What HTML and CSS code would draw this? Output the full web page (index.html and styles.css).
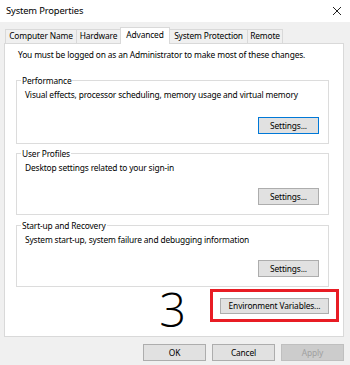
FILE: index.html
```html
<!DOCTYPE html>
<html lang="en">
<head>
<meta charset="utf-8">
<title>System Properties</title>
<link rel="stylesheet" href="styles.css">
</head>
<body>
<div class="window">
  <div class="titlebar">
    <span class="title">System Properties</span>
    <svg class="close" width="10" height="10" viewBox="0 0 10 10" aria-label="Close"><path d="M1 1 L9 9 M9 1 L1 9" stroke="#222" stroke-width="1" fill="none"/></svg>
  </div>
  <div class="content">
    <div class="tabs">
      <div class="tab t-name">Computer Name</div>
      <div class="tab t-hw">Hardware</div>
      <div class="tab t-adv active">Advanced</div>
      <div class="tab t-sp">System Protection</div>
      <div class="tab t-rem">Remote</div>
    </div>
    <div class="panel">
      <p class="notice">You must be logged on as an Administrator to make most of these changes.</p>
      <div class="group g1">
        <span class="legend">Performance</span>
        <p class="desc">Visual effects, processor scheduling, memory usage and virtual memory</p>
        <button class="btn settings focus">Settings...</button>
      </div>
      <div class="group g2">
        <span class="legend">User Profiles</span>
        <p class="desc">Desktop settings related to your sign-in</p>
        <button class="btn settings">Settings...</button>
      </div>
      <div class="group g3">
        <span class="legend">Start-up and Recovery</span>
        <p class="desc">System start-up, system failure and debugging information</p>
        <button class="btn settings">Settings...</button>
      </div>
      <div class="extra">
        <span class="step">3</span>
        <div class="highlight">
          <button class="btn env">Environment Variables...</button>
        </div>
      </div>
    </div>
    <div class="footer">
      <button class="btn foot">OK</button>
      <button class="btn foot">Cancel</button>
      <button class="btn foot disabled">Apply</button>
    </div>
  </div>
</div>
</body>
</html>
```

FILE: styles.css
```css
* { box-sizing: border-box; }
html, body { margin: 0; padding: 0; }
body {
  width: 350px;
  height: 365px;
  overflow: hidden;
  background: #f0f0f0;
  font-family: "Noto Sans", "Open Sans", sans-serif;
  font-size: 8.4px;
  letter-spacing: -0.15px;
  color: #000;
}
.window { width: 350px; height: 365px; background: #f0f0f0; }
.titlebar {
  height: 22px;
  background: #fff;
  display: flex;
  align-items: center;
  justify-content: space-between;
  padding: 0 8px 0 6px;
}
.title { font-size: 9.4px; line-height: 14px; }
.close { display: block; }
.content { padding: 5px 6px 0 4px; }
.tabs {
  display: flex;
  align-items: flex-end;
  padding-left: 1px;
  height: 16px;
}
.tab {
  height: 14px;
  border: 1px solid #d9d9d9;
  border-bottom: none;
  border-right: none;
  background: #f0f0f0;
  line-height: 12px;
  text-align: center;
  white-space: nowrap;
}
.t-name { width: 71px; }
.t-hw { width: 44px; }
.t-adv { width: 50px; }
.t-sp { width: 77px; border-left: none; }
.t-rem { width: 36px; border-right: 1px solid #d9d9d9; }
.tab.active {
  height: 17px;
  background: #fff;
  border-right: 1px solid #d9d9d9;
  margin-bottom: -1px;
  position: relative;
  z-index: 1;
  line-height: 14px;
}
.panel {
  height: 294px;
  background: #fff;
  border: 1px solid #d9d9d9;
  padding: 4px 14px 0 11px;
  display: flex;
  flex-direction: column;
}
.notice {
  margin: 0 0 19px 2px;
  line-height: 13px;
  white-space: nowrap;
}
.group {
  border: 1px solid #dcdcdc;
  display: flex;
  flex-direction: column;
  align-items: flex-start;
  padding: 0 9px 9px 6px;
}
.g1 { height: 64px; }
.g2 { height: 62px; margin-top: 9px; }
.g3 { height: 62px; margin-top: 10px; }
.legend {
  margin: -7px 0 0 -2px;
  padding: 0 1px;
  background: #fff;
  line-height: 13px;
  white-space: nowrap;
}
.desc {
  margin: 1px 0 0 2px;
  line-height: 13px;
  white-space: nowrap;
}
.btn {
  font-family: inherit;
  font-size: 8.4px;
  letter-spacing: -0.15px;
  color: #000;
  background: #e1e1e1;
  border: 1px solid #adadad;
  padding: 0;
  margin: 0;
  line-height: 14px;
}
.settings {
  margin-top: auto;
  align-self: flex-end;
  width: 61px;
  height: 17px;
}
.settings.focus { border-color: #0078d7; }
.extra {
  display: flex;
  justify-content: flex-end;
  align-items: flex-start;
  margin-right: -10px;
  margin-top: 2px;
}
.step {
  font-family: "Open Sans", sans-serif;
  font-weight: 300;
  font-size: 47px;
  letter-spacing: 0;
  line-height: 40px;
  margin-right: 24px;
}
.highlight {
  width: 129px;
  height: 33px;
  border: 3px solid #e81c24;
  padding: 6px 7px 0 7px;
}
.env { width: 109px; height: 16px; display: block; }
.footer {
  display: flex;
  justify-content: flex-end;
  gap: 6px;
  margin-top: 7px;
}
.foot { width: 63px; height: 17px; }
.foot.disabled {
  background: #cccccc;
  border-color: #bfbfbf;
  color: #a0a0a0;
}
```
